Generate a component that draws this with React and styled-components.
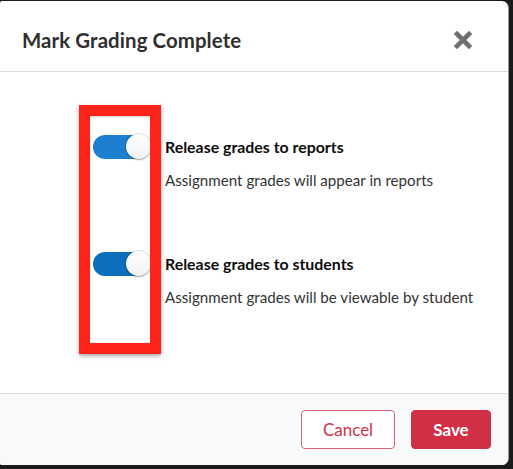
import React from "react";
import styled, { createGlobalStyle } from "styled-components";

const Global = createGlobalStyle`
  html, body { margin: 0; padding: 0; background: #1b1b1b; }
  body { width: 513px; height: 469px; overflow: hidden; font-family: Lato, "Open Sans", sans-serif; }
`;

const Modal = styled.div`
  position: relative;
  margin-top: 1px;
  width: 508px;
  height: 464px;
  background: #fff;
  border-right: 1px solid #9a9a9a;
  border-radius: 2px 7px 7px 2px;
  overflow: hidden;
  display: flex;
  flex-direction: column;
`;

const Header = styled.div`
  height: 70px;
  flex: none;
  display: flex;
  align-items: center;
  justify-content: space-between;
  padding: 0 36px 0 22px;
  border-bottom: 1px solid #dcdcdc;
`;

const Title = styled.h1`
  margin: 0;
  font-family: Lato, sans-serif;
  font-weight: 700;
  font-size: 20.4px;
  color: #2f2f2f;
  letter-spacing: 0.1px;
  padding-top: 7px;
`;

const Close = styled.button`
  border: 0;
  background: none;
  padding: 0;
  width: 18px;
  height: 18px;
  margin-top: 8px;
  display: flex;
  cursor: pointer;
`;

const Body = styled.div`
  flex: 1;
  padding: 62px 0 0 93px;
  display: flex;
  flex-direction: column;
  gap: 61px;
`;

const Row = styled.div`
  display: grid;
  grid-template-columns: 57px 1fr;
  column-gap: 15px;
  row-gap: 11px;
`;

const Track = styled.div`
  position: relative;
  width: 57px;
  height: 24px;
  margin-top: 0.5px;
  border-radius: 12px;
  background: ${(p) => p.$color};
`;

const Knob = styled.div`
  position: absolute;
  right: -1px;
  top: -0.5px;
  width: 25px;
  height: 25px;
  border-radius: 50%;
  background: linear-gradient(#ffffff, #f1f1f1);
  box-shadow: 0 0 0 1px rgba(0,0,0,0.12), 0 1px 2px rgba(0,0,0,0.25);
`;

const Heading = styled.div`
  font-family: Lato, sans-serif;
  font-weight: 700;
  font-size: 15.9px;
  line-height: 25px;
  color: #0d0d0d;
`;

const Desc = styled.div`
  grid-column: 2;
  font-family: Lato, sans-serif;
  font-size: 15.15px;
  line-height: 20px;
  color: #333;
`;

const Footer = styled.div`
  height: 71px;
  flex: none;
  border-top: 1px solid #dcdde0;
  background: #f8f9fb;
  display: flex;
  align-items: center;
  justify-content: flex-end;
  gap: 16px;
  padding: 0 17px 0 0;
`;

const Button = styled.button`
  height: 39px;
  padding: 0;
  width: ${(p) => p.$w}px;
  border-radius: 4px;
  font-family: Lato, sans-serif;
  font-size: 17px;
  cursor: pointer;
  border: 1px solid ${(p) => (p.$primary ? "#d02f45" : "#dc6273")};
  background: ${(p) => (p.$primary ? "#d02f45" : "#fff")};
  color: ${(p) => (p.$primary ? "#fff" : "#cf3247")};
  font-weight: ${(p) => (p.$primary ? 700 : 400)};
`;

const Highlight = styled.div`
  position: absolute;
  left: 79px;
  top: 104px;
  width: 60px;
  height: 227px;
  border: 11px solid #ff2419;
  box-shadow: 0 2px 4px rgba(0,0,0,0.35), inset 0 1px 2px rgba(0,0,0,0.2);
  pointer-events: none;
`;

function Toggle({ color }) {
  return (
    <Track $color={color}>
      <Knob />
    </Track>
  );
}

export default function App() {
  return (
    <>
      <Global />
      <Modal>
        <Header>
          <Title>Mark Grading Complete</Title>
          <Close aria-label="Close">
            <svg width="18" height="18" viewBox="0 0 18 18">
              <path d="M3 3 L15 15 M15 3 L3 15" stroke="#707070" strokeWidth="4.6" strokeLinecap="square" />
            </svg>
          </Close>
        </Header>
        <Body>
          <Row>
            <Toggle color="#1d7fcf" />
            <Heading>Release grades to reports</Heading>
            <Desc>Assignment grades will appear in reports</Desc>
          </Row>
          <Row>
            <Toggle color="#0c6fbd" />
            <Heading>Release grades to students</Heading>
            <Desc>Assignment grades will be viewable by student</Desc>
          </Row>
        </Body>
        <Footer>
          <Button $w={94}>Cancel</Button>
          <Button $w={80} $primary>Save</Button>
        </Footer>
        <Highlight />
      </Modal>
    </>
  );
}
